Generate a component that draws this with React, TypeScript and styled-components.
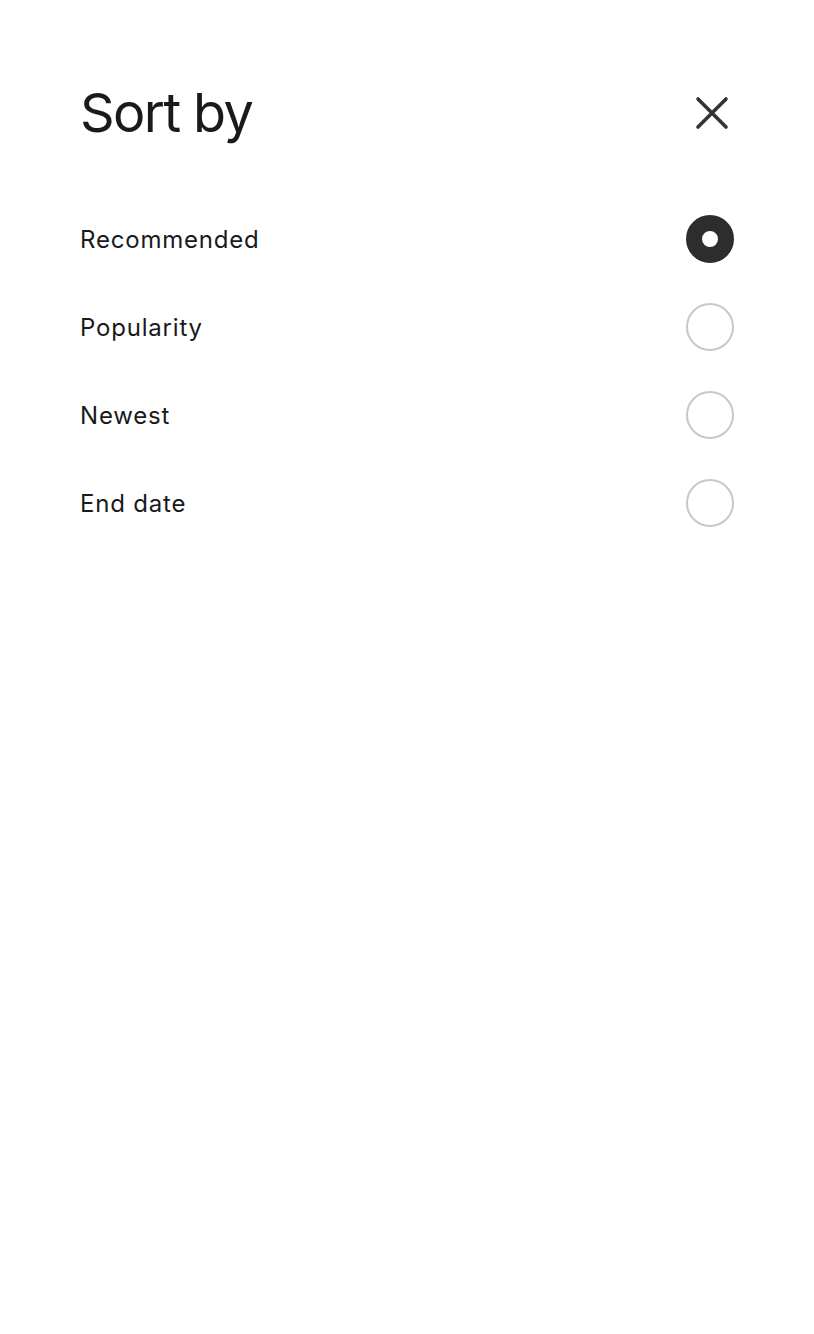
import React, { useState } from "react";
import styled, { createGlobalStyle } from "styled-components";

const GlobalStyle = createGlobalStyle`
  html, body {
    margin: 0;
    padding: 0;
    background: #ffffff;
  }
  body {
    font-family: Inter, "Noto Sans", "Liberation Sans", sans-serif;
    color: #1a1a1a;
  }
`;

const options = ["Recommended", "Popularity", "Newest", "End date"];

const App: React.FC = () => {
  const [selected, setSelected] = useState("Recommended");

  return (
    <>
      <GlobalStyle />
      <Sheet>
        <Header>
          <Title>Sort by</Title>
          <CloseButton aria-label="Close">
            <svg width="34" height="34" viewBox="0 0 34 34" fill="none">
              <path
                d="M3 3L31 31M31 3L3 31"
                stroke="#333333"
                strokeWidth="3.6"
                strokeLinecap="round"
              />
            </svg>
          </CloseButton>
        </Header>
        <OptionList role="radiogroup">
          {options.map((label) => (
            <OptionRow
              key={label}
              role="radio"
              aria-checked={selected === label}
              onClick={() => setSelected(label)}
            >
              <OptionLabel>{label}</OptionLabel>
              <Radio $checked={selected === label} />
            </OptionRow>
          ))}
        </OptionList>
      </Sheet>
    </>
  );
};

const Sheet = styled.div`
  min-height: 1334px;
  box-sizing: border-box;
  padding: 81px 80px 0 80px;
  background: #ffffff;
`;

const Header = styled.div`
  display: flex;
  align-items: center;
  justify-content: space-between;
  height: 64px;
`;

const Title = styled.h1`
  margin: 0;
  font-size: 54px;
  font-weight: 400;
  letter-spacing: -1.6px;
  line-height: 64px;
  color: #1a1a1a;
`;

const CloseButton = styled.button`
  display: flex;
  align-items: center;
  justify-content: center;
  width: 34px;
  height: 34px;
  margin-right: 5px;
  padding: 0;
  border: none;
  background: none;
  cursor: pointer;
`;

const OptionList = styled.div`
  display: flex;
  flex-direction: column;
  margin-top: 50px;
`;

const OptionRow = styled.div`
  display: flex;
  align-items: center;
  justify-content: space-between;
  height: 88px;
  cursor: pointer;
`;

const OptionLabel = styled.span`
  font-size: 24px;
  font-weight: 400;
  letter-spacing: 0.8px;
  color: #1a1a1a;
`;

const Radio = styled.span<{ $checked: boolean }>`
  box-sizing: border-box;
  width: 48px;
  height: 48px;
  border-radius: 50%;
  border: ${(p) => (p.$checked ? "16px solid #2d2d2d" : "2px solid #c8c8c8")};
  background: #ffffff;
`;

export default App;
